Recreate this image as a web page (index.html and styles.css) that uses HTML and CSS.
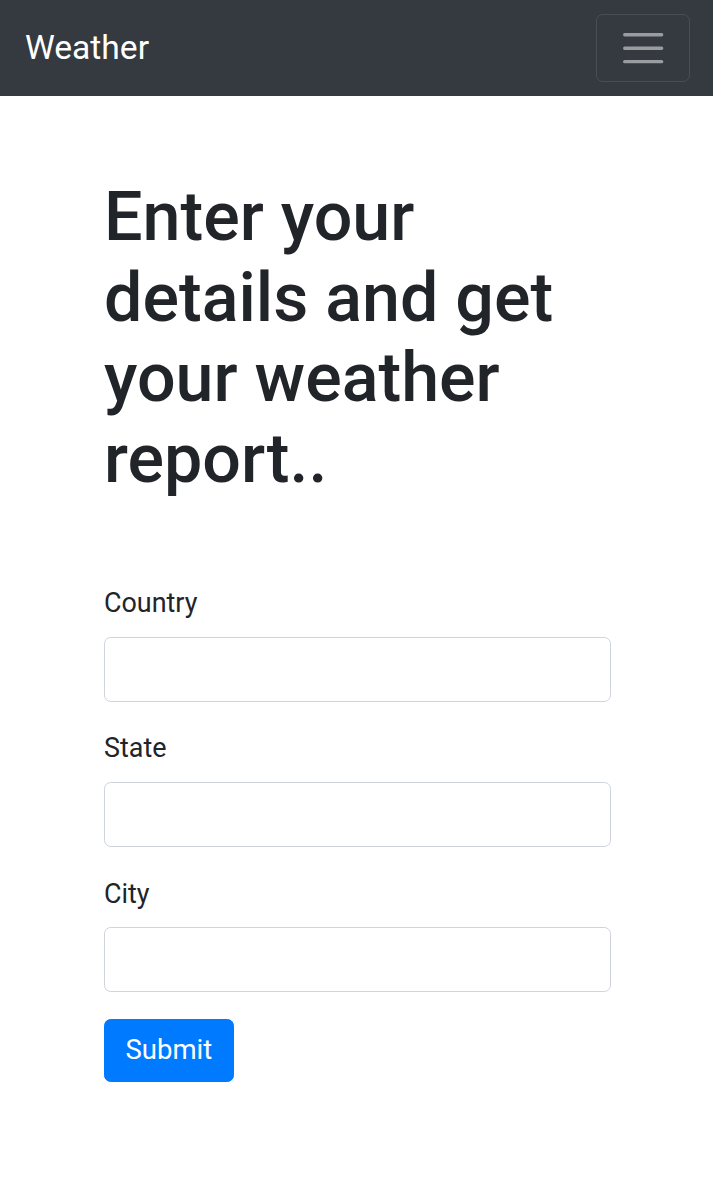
FILE: index.html
```html
<!DOCTYPE html>
<html lang="en">
<head>
<meta charset="utf-8">
<title>Weather</title>
<link rel="stylesheet" href="styles.css">
</head>
<body>
<nav class="navbar">
  <a class="brand" href="#">Weather</a>
  <button class="toggler" type="button" aria-label="Toggle navigation">
    <svg class="toggler-icon" viewBox="0 0 30 30" xmlns="http://www.w3.org/2000/svg">
      <path d="M4 7h22M4 15h22M4 23h22" stroke="rgba(255,255,255,0.5)" stroke-width="2" stroke-linecap="round" stroke-miterlimit="10" fill="none"/>
    </svg>
  </button>
</nav>
<main class="content">
  <h1 class="title">Enter your details and get your weather report..</h1>
  <form class="form">
    <div class="group">
      <label class="label" for="country">Country</label>
      <input class="input" id="country" type="text">
    </div>
    <div class="group">
      <label class="label" for="state">State</label>
      <input class="input" id="state" type="text">
    </div>
    <div class="group">
      <label class="label" for="city">City</label>
      <input class="input" id="city" type="text">
    </div>
    <button class="submit" type="submit">Submit</button>
  </form>
</main>
</body>
</html>
```
FILE: styles.css
```css
* { box-sizing: border-box; }
html, body { margin: 0; padding: 0; }
body {
  font-family: Roboto, "Liberation Sans", sans-serif;
  color: #212529;
  background: #fff;
  font-size: 26.9px;
  line-height: 1.5;
}
.navbar {
  height: 96px;
  background: #343a40;
  display: flex;
  align-items: center;
  justify-content: space-between;
  padding: 0 23px 0 25px;
}
.brand {
  color: #fff;
  text-decoration: none;
  font-size: 33.6px;
  line-height: 1.5;
}
.toggler {
  width: 94px;
  height: 68px;
  background: transparent;
  border: 1.5px solid rgba(255,255,255,0.1);
  border-radius: 6.7px;
  display: flex;
  align-items: center;
  justify-content: center;
  padding: 0;
}
.toggler-icon {
  width: 50.4px;
  height: 50.4px;
  display: block;
}
.content {
  width: 507px;
  margin-left: 104px;
  padding-top: 81px;
}
.title {
  margin: 0 0 84px;
  font-size: 68.2px;
  font-weight: 500;
  line-height: 80.6px;
}
.form { margin: 0; }
.group {
  display: flex;
  flex-direction: column;
  margin-bottom: 26.9px;
}
.label {
  display: block;
  margin-bottom: 13.4px;
  line-height: 40.3px;
}
.input {
  display: block;
  width: 100%;
  height: 64.5px;
  border: 1.5px solid #ced4da;
  border-radius: 6.7px;
  background: #fff;
  font: inherit;
  padding: 0 20px;
}
.submit {
  display: block;
  margin-top: 2px;
  height: 63px;
  padding: 0 20.5px;
  background: #007bff;
  color: #fff;
  border: 1px solid #007bff;
  border-radius: 6.7px;
  font-family: inherit;
  font-size: 27.5px;
  line-height: 1.5;
}
```
